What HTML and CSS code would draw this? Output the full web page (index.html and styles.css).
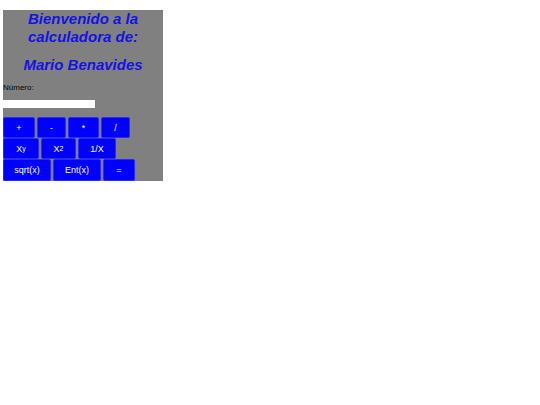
FILE: index.html
```html
<!DOCTYPE html>
<html lang="es">
<head>
<meta charset="utf-8">
<title>Calculadora</title>
<link rel="stylesheet" href="styles.css">
</head>
<body>
<div class="calc">
  <h1 class="title">Bienvenido a la calculadora de:</h1>
  <h2 class="author">Mario Benavides</h2>
  <label class="label" for="num">Número:</label>
  <input class="field" id="num" type="text">
  <div class="keys">
    <div class="row">
      <button class="key w32">+</button>
      <button class="key w29">-</button>
      <button class="key w30">*</button>
      <button class="key w29">/</button>
    </div>
    <div class="row">
      <button class="key w36">X<span class="sup">y</span></button>
      <button class="key w35">X<span class="sup">2</span></button>
      <button class="key w38">1/X</button>
    </div>
    <div class="row last">
      <button class="key w48">sqrt(x)</button>
      <button class="key w48">Ent(x)</button>
      <button class="key w32">=</button>
    </div>
  </div>
</div>
</body>
</html>
```
FILE: styles.css
```css
html, body {
  margin: 0;
  padding: 0;
  background: #ffffff;
}
body {
  padding: 10px 0 0 3px;
  font-family: "Liberation Sans", Arial, sans-serif;
}
.calc {
  width: 160px;
  height: 171px;
  background: #808080;
  display: flex;
  flex-direction: column;
}
.title {
  margin: 0;
  padding-top: 0;
  font-size: 15px;
  line-height: 18px;
  font-style: italic;
  font-weight: bold;
  color: #1414e0;
  text-align: center;
}
.author {
  margin: 10px 0 0 0;
  font-size: 15px;
  line-height: 18px;
  font-style: italic;
  font-weight: bold;
  color: #1414e0;
  text-align: center;
}
.label {
  margin-top: 9px;
  font-size: 8px;
  line-height: 10px;
  color: #000000;
}
.field {
  margin: 7px 0 0 0;
  width: 92px;
  height: 8px;
  padding: 0;
  border: none;
  background: #ffffff;
  box-sizing: border-box;
}
.keys {
  margin-top: 9px;
  display: flex;
  flex-direction: column;
}
.row {
  display: flex;
  gap: 2px;
  height: 21px;
}
.row.last {
  height: 22px;
}
.key {
  height: 100%;
  margin: 0;
  padding: 0;
  border: 1px solid #2a2aff;
  border-radius: 2px;
  background: #0000ff;
  color: #ffffff;
  font-family: "Liberation Sans", Arial, sans-serif;
  font-size: 9px;
  box-sizing: border-box;
}
.sup {
  font-size: 7px;
  vertical-align: 1px;
}
.w29 { width: 29px; }
.w30 { width: 31px; }
.w32 { width: 32px; }
.w35 { width: 35px; }
.w36 { width: 36px; }
.w38 { width: 38px; }
.w47 { width: 47px; }
.w48 { width: 48px; }
```
